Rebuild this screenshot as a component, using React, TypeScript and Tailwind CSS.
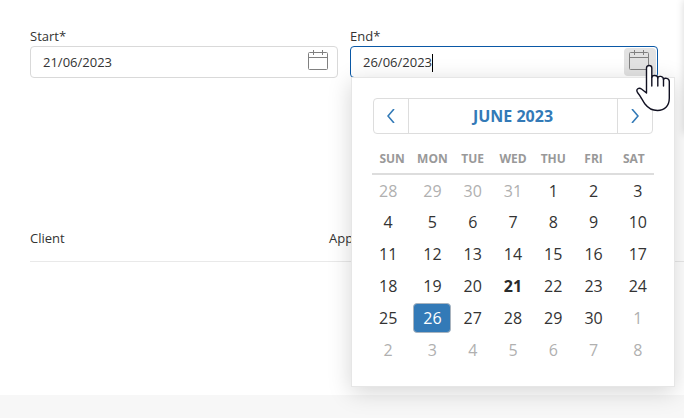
import React, { useState } from 'react';

interface Day {
  day: number;
  muted?: boolean;
  today?: boolean;
}

const WEEKDAYS = ['SUN', 'MON', 'TUE', 'WED', 'THU', 'FRI', 'SAT'];

const buildWeeks = (): Day[][] => {
  const days: Day[] = [];
  for (let d = 28; d <= 31; d++) days.push({ day: d, muted: true });
  for (let d = 1; d <= 30; d++) days.push({ day: d, today: d === 21 });
  for (let d = 1; d <= 8; d++) days.push({ day: d, muted: true });
  return [0, 1, 2, 3, 4, 5].map((w) => days.slice(w * 7, w * 7 + 7));
};

const CalendarIcon = () => (
  <svg width="20" height="20" viewBox="0 0 20 20" fill="none" stroke="#808080" strokeWidth="1">
    <rect x="0.5" y="2.5" width="19" height="17" rx="1" />
    <path d="M0.5 7.5h19M5.5 0v5M14.5 0v5" />
  </svg>
);

const HandPointer = () => (
  <svg
    className="absolute left-[636px] top-[64px] z-20 pointer-events-none"
    width="35"
    height="48"
    viewBox="0 0 35 48"
    fill="white"
    stroke="#111122"
    strokeWidth="1.4"
    strokeLinejoin="round"
    strokeLinecap="round"
  >
    <path d="M10.500 29V4C10.500 0.700 15.800 0.700 15.800 4V13.500C16 10.700 21.800 10.700 21.800 14C22 11.500 27.500 11.700 27.500 15.500C28 13.500 33.300 14 33.300 17.500V34C33.300 42 28.500 46.500 21.500 46.500C15 46.500 12 44 9 40C6.500 36.500 4.500 32 1.500 28.500C-0.500 25 3 23.200 5.500 25Z" />
    <path d="M15.800 13.500v8.500M21.800 14v8M27.500 15.500v6.500" fill="none" />
  </svg>
);

interface DateFieldProps {
  id: string;
  label: string;
  value: string;
  active?: boolean;
  onChange: (v: string) => void;
  onToggle?: () => void;
}

const DateField = ({ id, label, value, active, onChange, onToggle }: DateFieldProps) => (
  <div>
    <label htmlFor={id} className="block h-5 leading-5">{label}</label>
    <div
      className={
        active
          ? 'relative flex h-8 items-center rounded border border-[#0a58a6] bg-white pl-3 pr-px'
          : 'relative flex h-8 items-center rounded border border-[#d9d9d9] bg-white pl-3 pr-0.5'
      }
    >
      <input
        id={id}
        type="text"
        value={value}
        onChange={(e) => onChange(e.target.value)}
        className="min-w-0 flex-1 bg-transparent pt-0.5 outline-none"
      />
      {active && <span className="absolute left-[81px] top-[7px] h-[18px] w-px bg-black" />}
      <button
        type="button"
        aria-label={`Open ${label} calendar`}
        onClick={onToggle}
        className={
          active
            ? 'flex h-7 w-8 items-start justify-start rounded bg-[#e2e2e2] pl-[5px] pt-0.5'
            : 'flex h-7 w-8 items-start justify-start rounded pl-[5px] pt-0.5'
        }
      >
        <CalendarIcon />
      </button>
    </div>
  </div>
);

const Chevron = ({ d }: { d: string }) => (
  <svg width="8" height="14" viewBox="0 0 8 14" fill="none" stroke="#337ab7" strokeWidth="1.6">
    <path d={d} />
  </svg>
);

const Calendar = () => {
  const [selected, setSelected] = useState(26);

  const dayClass = (d: Day) => {
    const base = 'mx-auto block h-[30px] w-full max-w-[38px] rounded-sm border ';
    if (!d.muted && d.day === selected) return base + 'border-[#a9b4bf] bg-[#337ab7] text-white';
    if (d.muted) return base + 'border-transparent text-[#b0b0b0]';
    if (d.today) return base + 'border-transparent font-bold text-[#292b2c]';
    return base + 'border-transparent text-[#333333]';
  };

  return (
    <div className="absolute left-px top-[51px] z-10 w-[324px] border border-[#e6e6e6] bg-white px-5 pt-5 pb-5 shadow-[0_5px_22px_rgba(0,0,0,0.17)]">
      <div className="mx-px flex h-9 rounded border border-[#dddddd]">
        <button type="button" aria-label="Previous month" className="flex w-[34px] items-center justify-center">
          <Chevron d="M7 0L1 7l6 7" />
        </button>
        <button type="button" className="flex-1 border-x border-[#dddddd] text-base font-bold text-[#337ab7]">
          JUNE 2023
        </button>
        <button type="button" aria-label="Next month" className="flex w-[34px] items-center justify-center">
          <Chevron d="M1 0l6 7l-6 7" />
        </button>
      </div>
      <table className="mt-2 w-full table-fixed border-collapse text-base">
        <thead>
          <tr className="h-8 border-b-2 border-[#dddddd] text-xs text-[#999999]">
            {WEEKDAYS.map((name) => (
              <th key={name} scope="col" className="px-0 pt-0.5 pb-0 font-bold">{name}</th>
            ))}
          </tr>
        </thead>
        <tbody>
          {buildWeeks().map((week, i) => (
            <tr key={i} className="h-8">
              {week.map((d, j) => (
                <td key={j} className="p-0 first:pr-2 last:pl-2">
                  <button type="button" onClick={() => setSelected(d.day)} className={dayClass(d)}>
                    {d.day}
                  </button>
                </td>
              ))}
            </tr>
          ))}
        </tbody>
      </table>
    </div>
  );
};

const App = () => {
  const [start, setStart] = useState('21/06/2023');
  const [end, setEnd] = useState('26/06/2023');
  const [open, setOpen] = useState(true);

  return (
    <div className="relative flex min-h-screen flex-col overflow-hidden bg-[#f7f7f7] font-['Open_Sans',sans-serif] text-[13px] text-[#333333]">
      <main className="bg-white pt-[26px] pb-[133px]">
        <div className="grid grid-cols-2 gap-3 pl-[30px] pr-[26px]">
          <DateField id="start" label="Start*" value={start} onChange={setStart} />
          <div className="relative">
            <DateField id="end" label="End*" value={end} active onChange={setEnd} onToggle={() => setOpen(!open)} />
            {open && <Calendar />}
          </div>
        </div>
        <div className="mt-[137px] pl-[30px]">
          <table className="w-full table-fixed border-collapse text-left">
            <thead>
              <tr className="h-[46px] border-b border-[#e9e9e9]">
                <th scope="col" className="w-[299px] px-0 pt-0.5 pb-0 font-normal">Client</th>
                <th scope="col" className="px-0 pt-0.5 pb-0 font-normal">App</th>
              </tr>
            </thead>
          </table>
        </div>
      </main>
      {/* shadow of the side panel */}
      <div className="absolute left-full top-0 h-[134px] w-10 shadow-[0_0_8px_rgba(0,0,0,0.16)]" />
      <HandPointer />
    </div>
  );
};

export default App;
